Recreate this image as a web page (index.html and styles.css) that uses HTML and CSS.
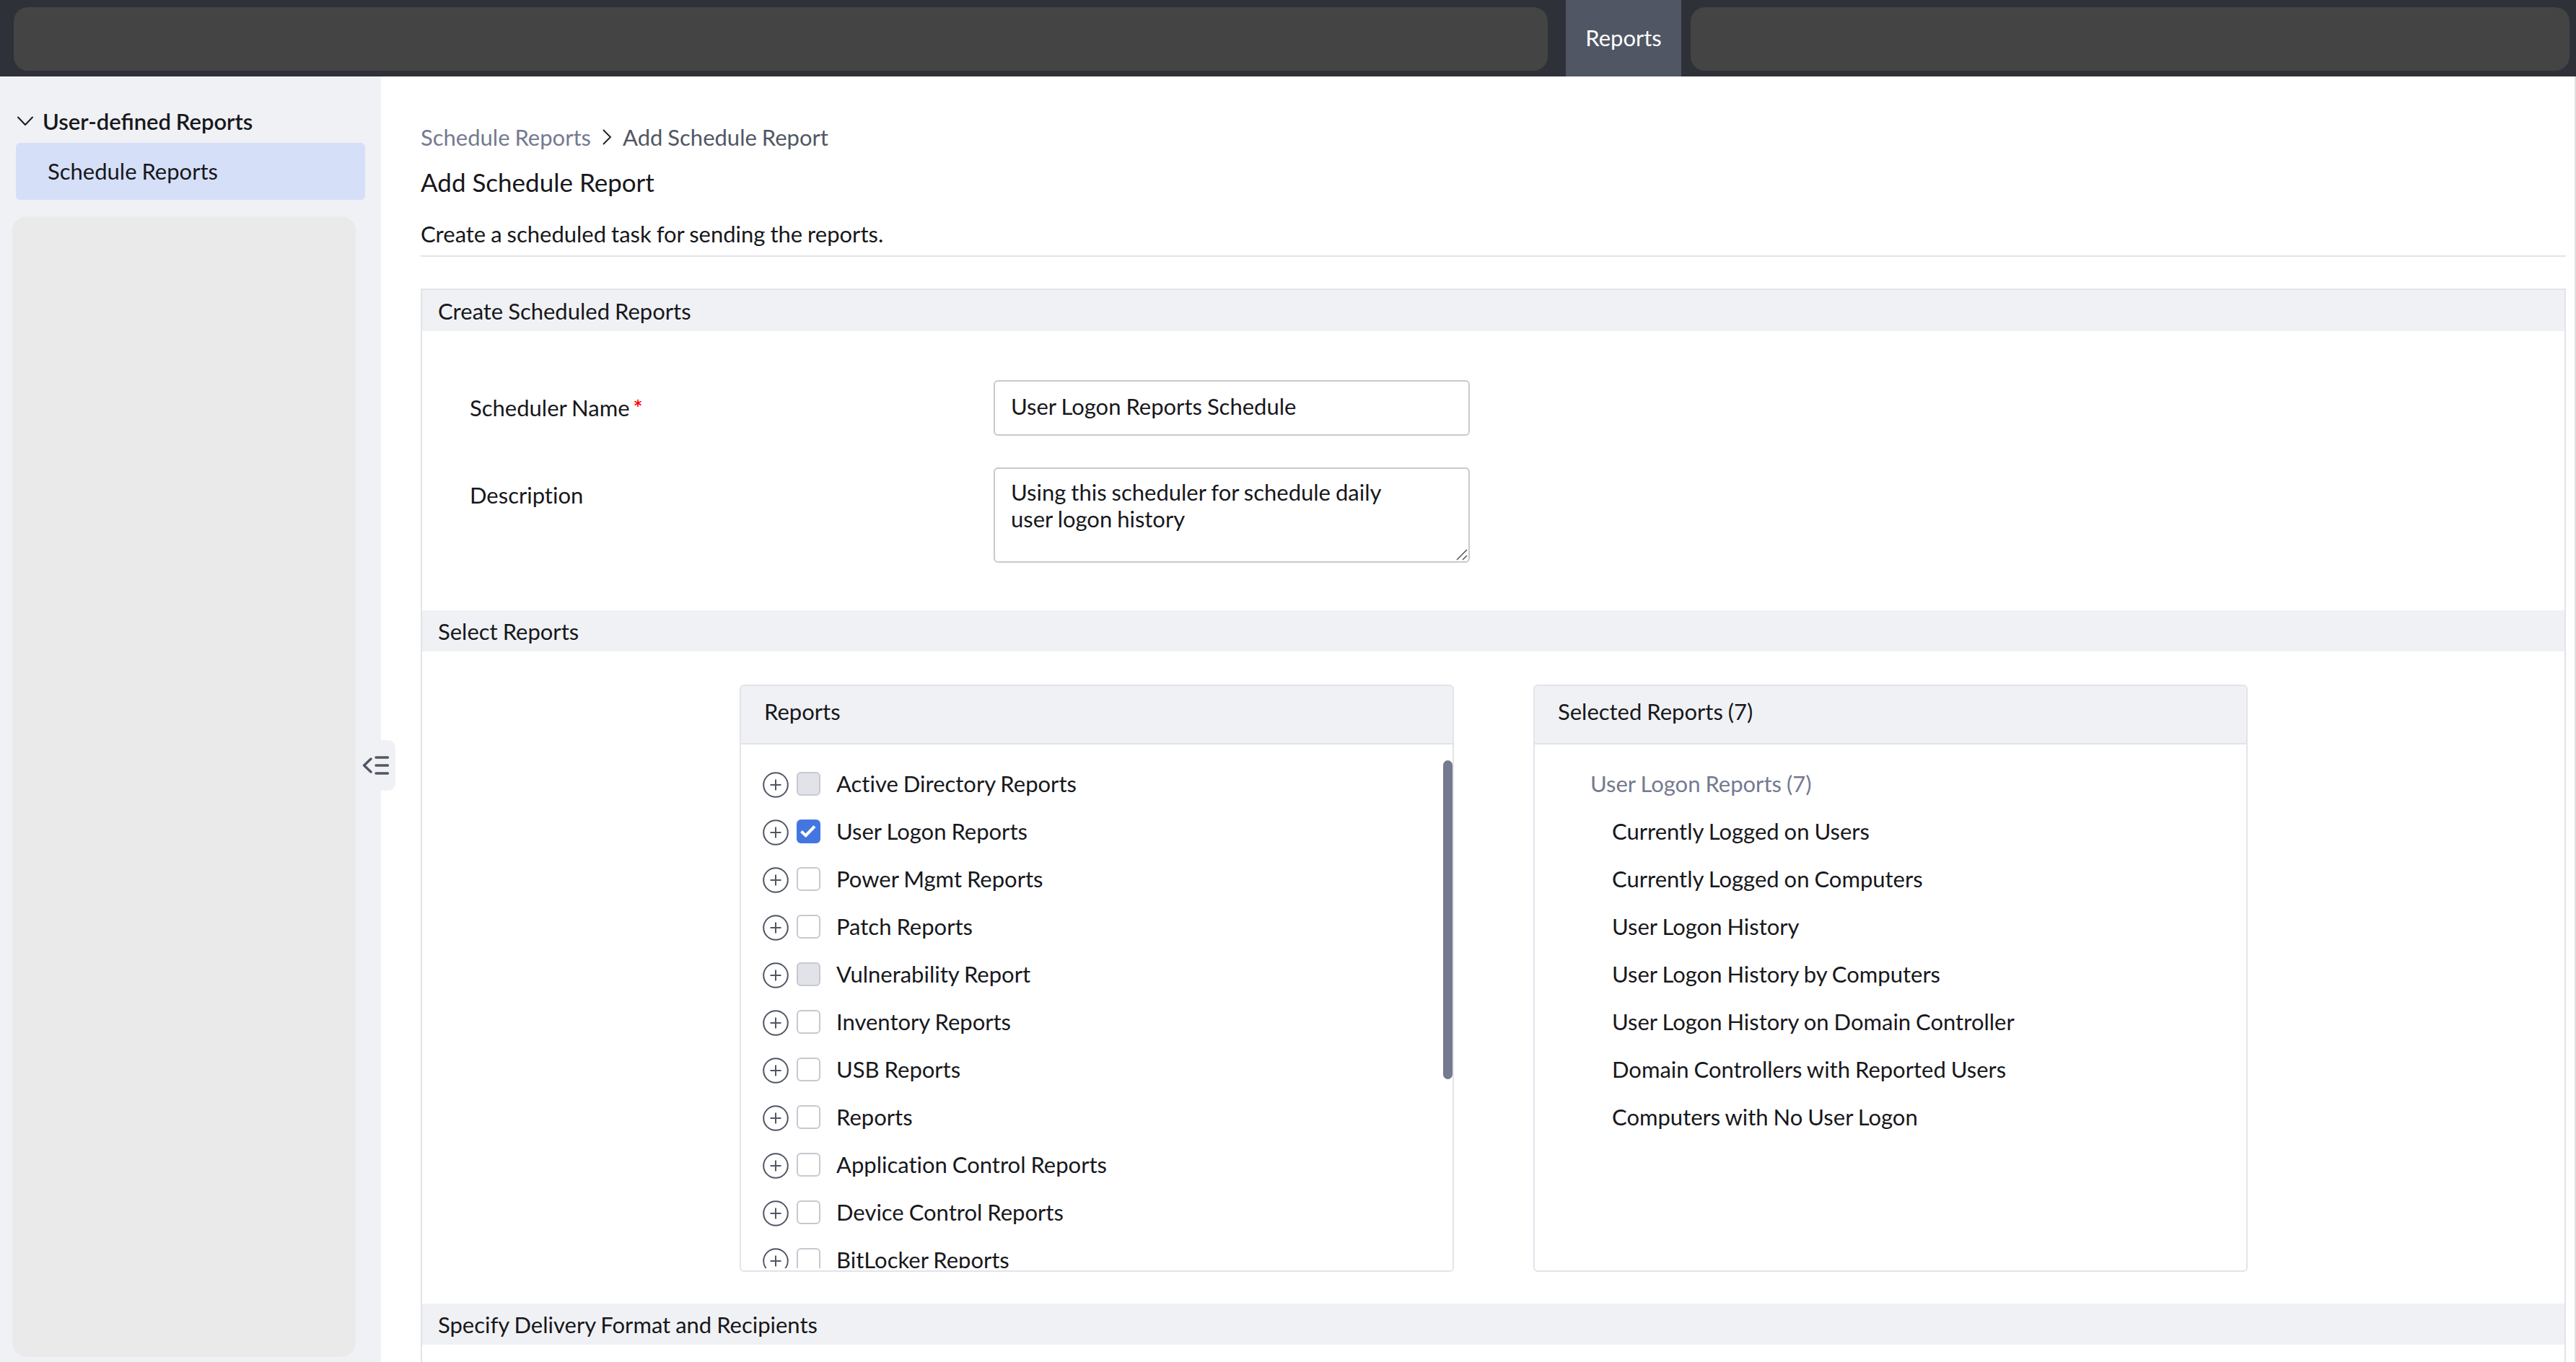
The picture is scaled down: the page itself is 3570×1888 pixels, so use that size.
FILE: index.html
```html
<!DOCTYPE html>
<html lang="en">
<head>
    <meta charset="UTF-8">
    <title>Add Schedule Report</title>
    <link rel="stylesheet" href="styles.css">
</head>
<body>
    <svg class="defs">
        <symbol id="plus" viewBox="0 0 36 36">
            <circle cx="18" cy="18" r="16.8" fill="none" stroke="#515664" stroke-width="2"/>
            <path d="M18 10.5v15M10.5 18h15" stroke="#515664" stroke-width="2"/>
        </symbol>
    </svg>
    <header class="topbar">
        <div class="topbar-block block-left"></div>
        <a class="tab">Reports</a>
        <div class="topbar-block block-right"></div>
    </header>
    <div class="layout">
        <aside class="sidebar">
            <div class="menu-title">
                <svg width="24" height="16" viewBox="0 0 24 16"><path d="M2 2.5L12 13L22 2.5" fill="none" stroke="#1a1b20" stroke-width="2" stroke-linecap="round" stroke-linejoin="round"/></svg>
                <span>User-defined Reports</span>
            </div>
            <a class="menu-item">Schedule Reports</a>
            <div class="menu-block"></div>
            <button class="collapse">
                <svg width="38" height="28" viewBox="0 0 38 28"><path d="M12 5L2.5 14L12 23M19 3H35.500M19 14H35.500M19 25H35.500" fill="none" stroke="#515664" stroke-width="3.400" stroke-linecap="round" stroke-linejoin="round"/></svg>
            </button>
        </aside>
        <main class="content">
            <nav class="breadcrumb">
                <a>Schedule Reports</a>
                <svg width="14" height="24" viewBox="0 0 14 24"><path d="M2 2L12 12L2 22" fill="none" stroke="#1a1b20" stroke-width="1.800"/></svg>
                <span>Add Schedule Report</span>
            </nav>
            <h1>Add Schedule Report</h1>
            <p class="intro">Create a scheduled task for sending the reports.</p>
            <form class="schedule">
                <h2>Create Scheduled Reports</h2>
                <div class="fields">
                    <label for="name">Scheduler Name<span class="required">*</span></label>
                    <input type="text" id="name" value="User Logon Reports Schedule">
                    <label for="description">Description</label>
                    <div class="textarea-wrap">
                        <textarea id="description">Using this scheduler for schedule daily
user logon history</textarea>
                        <svg class="grip" width="16" height="16" viewBox="0 0 16 16"><path d="M1 15L15 1M9 15L15 9" fill="none" stroke="#5c5c5c" stroke-width="1.600"/></svg>
                    </div>
                </div>
                <h2>Select Reports</h2>
                <div class="pickers">
                    <section class="panel">
                        <h3>Reports</h3>
                        <div class="panel-body">
                            <ul class="tree">
                                <li><svg class="plus"><use href="#plus"/></svg><span class="box disabled"></span>Active Directory Reports</li>
                                <li><svg class="plus"><use href="#plus"/></svg><span class="box checked"><svg width="33" height="33" viewBox="0 0 33 33"><path d="M6.500 16.500L12.700 22.200L25 9.500" fill="none" stroke="#fff" stroke-width="4"/></svg></span>User Logon Reports</li>
                                <li><svg class="plus"><use href="#plus"/></svg><span class="box"></span>Power Mgmt Reports</li>
                                <li><svg class="plus"><use href="#plus"/></svg><span class="box"></span>Patch Reports</li>
                                <li><svg class="plus"><use href="#plus"/></svg><span class="box disabled"></span>Vulnerability Report</li>
                                <li><svg class="plus"><use href="#plus"/></svg><span class="box"></span>Inventory Reports</li>
                                <li><svg class="plus"><use href="#plus"/></svg><span class="box"></span>USB Reports</li>
                                <li><svg class="plus"><use href="#plus"/></svg><span class="box"></span>Reports</li>
                                <li><svg class="plus"><use href="#plus"/></svg><span class="box"></span>Application Control Reports</li>
                                <li><svg class="plus"><use href="#plus"/></svg><span class="box"></span>Device Control Reports</li>
                                <li><svg class="plus"><use href="#plus"/></svg><span class="box"></span>BitLocker Reports</li>
                            </ul>
                            <div class="scrollbar"></div>
                        </div>
                    </section>
                    <section class="panel">
                        <h3>Selected Reports (7)</h3>
                        <ul class="selected">
                            <li class="group">User Logon Reports (7)</li>
                            <li>Currently Logged on Users</li>
                            <li>Currently Logged on Computers</li>
                            <li>User Logon History</li>
                            <li>User Logon History by Computers</li>
                            <li>User Logon History on Domain Controller</li>
                            <li>Domain Controllers with Reported Users</li>
                            <li>Computers with No User Logon</li>
                        </ul>
                    </section>
                </div>
                <h2>Specify Delivery Format and Recipients</h2>
            </form>
        </main>
    </div>
</body>
</html>
```
FILE: styles.css
```css
* {
  box-sizing: border-box;
}

body {
  margin: 0;
  height: 1888px;
  overflow: hidden;
  display: flex;
  flex-direction: column;
  font-family: Lato, sans-serif;
  font-size: 31px;
  line-height: 36px;
  word-spacing: -1px;
  color: #17181c;
  background-color: #ffffff;
}

h1, h2, h3, p, ul {
  margin: 0;
  padding: 0;
  font-weight: 400;
  list-style: none;
}

svg {
  display: block;
  flex-shrink: 0;
}

.defs {
  position: absolute;
  width: 0;
  height: 0;
}

/* top bar */
.topbar {
  display: flex;
  align-items: center;
  height: 106px;
  flex-shrink: 0;
  padding: 0 9px 0 19px;
  background-color: #2f3139;
}

.topbar-block {
  height: 88px;
  margin-top: 2px;
  border-radius: 20px;
  background-color: #444444;
}

.block-left {
  width: 2126px;
}

.block-right {
  flex: 1;
}

.tab {
  width: 160px;
  height: 106px;
  margin: 0 13px 0 25px;
  line-height: 104px;
  text-align: center;
  color: #ffffff;
  background-color: #515664;
}

.layout {
  display: flex;
  flex: 1;
  min-height: 0;
}

/* sidebar */
.sidebar {
  position: relative;
  width: 528px;
  flex-shrink: 0;
  display: flex;
  flex-direction: column;
  background-color: #f0f1f4;
}

.menu-title {
  display: flex;
  align-items: center;
  height: 92px;
  padding: 32px 0 0 23px;
  gap: 12px;
  font-weight: 600;
}

.menu-item {
  height: 79px;
  margin: 0 22px;
  padding-left: 44px;
  line-height: 79px;
  border-radius: 6px;
  background-color: #d6dff8;
}

.menu-block {
  width: 476px;
  height: 1581px;
  margin: 23px 0 0 17px;
  border-radius: 20px;
  background-color: #eaeaea;
}

.collapse {
  position: absolute;
  top: 920px;
  right: -20px;
  width: 50px;
  height: 70px;
  padding: 0 0 0 4px;
  border: none;
  border-radius: 0 10px 10px 0;
  background-color: #f0f1f4;
}

/* content */
.content {
  flex: 1;
  padding: 66px 12px 0 55px;
  border-right: 2px solid #e0e0e0;
  font-variant-ligatures: none;
}

.breadcrumb {
  display: flex;
  align-items: center;
  gap: 15px;
  color: #515664;
}

.breadcrumb a {
  color: #747a90;
}

h1 {
  margin-top: 23px;
  font-size: 35px;
  line-height: 42px;
  word-spacing: 0;
}

.intro {
  height: 83px;
  padding-top: 33px;
  border-bottom: 2px solid #e3e3ea;
}

.schedule {
  height: 1488px;
  margin-top: 44px;
  border: 2px solid #e3e3ea;
  border-bottom: none;
}

h2 {
  height: 57px;
  padding-left: 22px;
  font-size: 31px;
  line-height: 58px;
  background-color: #f0f1f4;
}

.fields {
  display: grid;
  grid-template-columns: 726px 660px;
  grid-template-rows: 77px 132px;
  row-gap: 44px;
  height: 387px;
  padding: 68px 0 0 66px;
}

.fields label {
  padding-top: 20px;
}

.required {
  margin-left: 5px;
  font-weight: 600;
  color: #ff0000;
}

input, textarea {
  margin: 0;
  border: 2px solid #c8c8d0;
  border-radius: 6px;
  font: inherit;
  word-spacing: inherit;
  color: inherit;
  outline: none;
}

input {
  padding: 0 22px 6px;
}

.textarea-wrap {
  position: relative;
}

textarea {
  display: block;
  width: 100%;
  height: 132px;
  padding: 14px 22px;
  line-height: 37px;
  overflow: hidden;
  resize: none;
}

.grip {
  position: absolute;
  right: 3px;
  bottom: 3px;
}

/* report pickers */
.pickers {
  display: flex;
  gap: 110px;
  height: 904px;
  padding: 46px 0 0 440px;
}

.panel {
  width: 990px;
  height: 814px;
  border: 2px solid #e3e3ea;
  border-radius: 6px;
}

h3 {
  height: 81px;
  padding: 17px 0 0 32px;
  font-size: 31px;
  border-bottom: 2px solid #e3e3ea;
  border-radius: 4px 4px 0 0;
  background-color: #f0f1f4;
}

.panel-body {
  display: flex;
  justify-content: space-between;
  height: 726px;
  overflow: hidden;
}

.tree, .selected {
  padding-top: 21px;
}

.tree li {
  display: flex;
  align-items: center;
  height: 66px;
  padding-left: 30px;
  white-space: nowrap;
}

.plus {
  width: 36px;
  height: 36px;
  margin-top: 4px;
}

.box {
  width: 33px;
  height: 33px;
  margin: 1px 22px 0 11px;
  border: 2px solid #c8c8d0;
  border-radius: 6px;
}

.disabled {
  background-color: #e2e3e9;
}

.checked {
  border: none;
  background-color: #4476e2;
}

.scrollbar {
  width: 13px;
  height: 442px;
  margin-top: 22px;
  border-radius: 7px;
  background-color: #747a90;
}

.selected li {
  padding-left: 107px;
  line-height: 66px;
}

.selected .group {
  padding-left: 77px;
  color: #747a90;
}
```
